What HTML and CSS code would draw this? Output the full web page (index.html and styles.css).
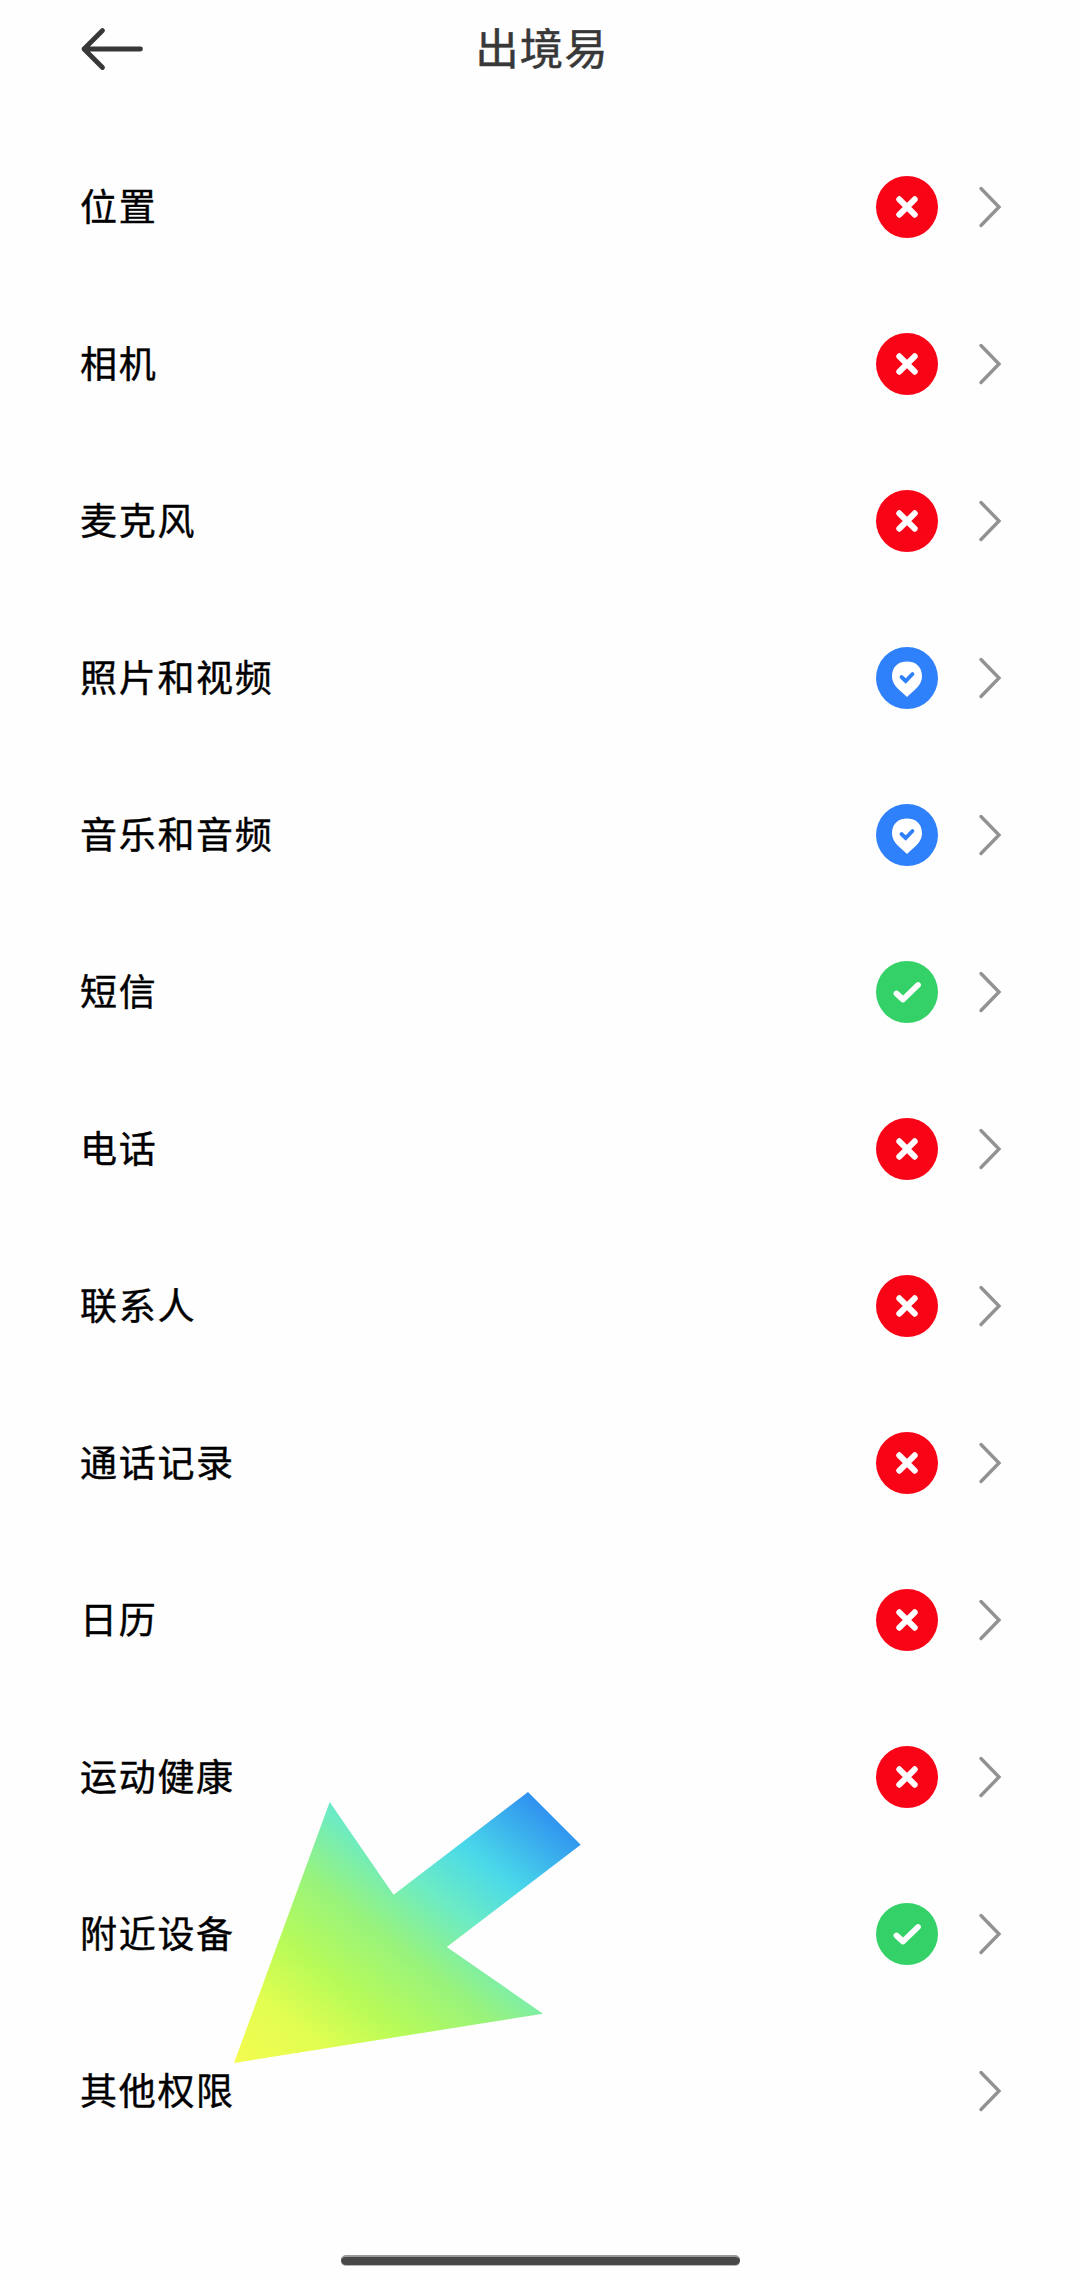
FILE: index.html
```html
<!DOCTYPE html>
<html lang="zh-CN">
<head>
<meta charset="utf-8">
<title>出境易</title>
<link rel="stylesheet" href="styles.css">
</head>
<body>
<svg class="defs" width="0" height="0" aria-hidden="true">
  <symbol id="denied" viewBox="0 0 62 62"><circle cx="31" cy="31" r="31" fill="#f90417"/><path d="M23.3 23.3 38.7 38.7M38.7 23.3 23.3 38.7" fill="none" stroke="#fff" stroke-width="6" stroke-linecap="round"/></symbol>
  <symbol id="partial" viewBox="0 0 62 62"><circle cx="31" cy="31" r="31" fill="#2f80fb"/><path d="M31 14.5C38.5 14.5 46 18.500 46 29.500C46 39 37 43.500 31 50C25 43.500 16 39 16 29.500C16 18.500 23.500 14.500 31 14.500Z" fill="#fff"/><path d="M25.500 30 29.700 34 36.500 27" fill="none" stroke="#2f80fb" stroke-width="3.800" stroke-linecap="round"/></symbol>
  <symbol id="allowed" viewBox="0 0 62 62"><circle cx="31" cy="31" r="31" fill="#33d168"/><path d="M20.500 32.500 27 38.500 42 24" fill="none" stroke="#fff" stroke-width="5.800" stroke-linecap="round" stroke-linejoin="round"/></symbol>
  <symbol id="chevron" viewBox="0 0 24 42"><path d="M3 2.500 21 21 3 39.500" fill="none" stroke="#929292" stroke-width="3.400" stroke-linecap="round"/></symbol>
</svg>
<div class="screen">
  <header class="header">
    <svg class="back" viewBox="0 0 64 44"><path d="M4 22H60.500M22.500 3.500 4 22 22.500 40.500" fill="none" stroke="#383838" stroke-width="4.800" stroke-linecap="round" stroke-linejoin="round"/></svg>
    <h1 class="title">出境易</h1>
  </header>
  <ul class="list">
    <li class="row"><span class="label">位置</span><svg class="status"><use href="#denied"/></svg><svg class="chevron"><use href="#chevron"/></svg></li>
    <li class="row"><span class="label">相机</span><svg class="status"><use href="#denied"/></svg><svg class="chevron"><use href="#chevron"/></svg></li>
    <li class="row"><span class="label">麦克风</span><svg class="status"><use href="#denied"/></svg><svg class="chevron"><use href="#chevron"/></svg></li>
    <li class="row"><span class="label">照片和视频</span><svg class="status"><use href="#partial"/></svg><svg class="chevron"><use href="#chevron"/></svg></li>
    <li class="row"><span class="label">音乐和音频</span><svg class="status"><use href="#partial"/></svg><svg class="chevron"><use href="#chevron"/></svg></li>
    <li class="row"><span class="label">短信</span><svg class="status"><use href="#allowed"/></svg><svg class="chevron"><use href="#chevron"/></svg></li>
    <li class="row"><span class="label">电话</span><svg class="status"><use href="#denied"/></svg><svg class="chevron"><use href="#chevron"/></svg></li>
    <li class="row"><span class="label">联系人</span><svg class="status"><use href="#denied"/></svg><svg class="chevron"><use href="#chevron"/></svg></li>
    <li class="row"><span class="label">通话记录</span><svg class="status"><use href="#denied"/></svg><svg class="chevron"><use href="#chevron"/></svg></li>
    <li class="row"><span class="label">日历</span><svg class="status"><use href="#denied"/></svg><svg class="chevron"><use href="#chevron"/></svg></li>
    <li class="row"><span class="label">运动健康</span><svg class="status"><use href="#denied"/></svg><svg class="chevron"><use href="#chevron"/></svg></li>
    <li class="row"><span class="label">附近设备</span><svg class="status"><use href="#allowed"/></svg><svg class="chevron"><use href="#chevron"/></svg></li>
    <li class="row"><span class="label">其他权限</span><svg class="chevron"><use href="#chevron"/></svg></li>
  </ul>
  <div class="home-bar"></div>
  <svg class="pointer" viewBox="234 1791 348 274">
    <defs>
      <linearGradient id="rainbow" gradientUnits="userSpaceOnUse" x1="554" y1="1812" x2="308" y2="2123">
        <stop offset="0" stop-color="#2f90f0"/>
        <stop offset=".21" stop-color="#4ad9e9"/>
        <stop offset=".35" stop-color="#6cebc4"/>
        <stop offset=".51" stop-color="#98f37c"/>
        <stop offset=".68" stop-color="#b8fb58"/>
        <stop offset=".83" stop-color="#e2fe50"/>
        <stop offset="1" stop-color="#f4fb50"/>
      </linearGradient>
    </defs>
    <path d="M234 2063 329.700 1802 393.600 1894.700 528 1792 580.700 1844.700 446.800 1947 543 2013.700Z" fill="url(#rainbow)"/>
  </svg>
</div>
</body>
</html>
```
FILE: styles.css
```css
* { box-sizing: border-box; }

body {
  margin: 0;
  background: #fefefe;
  font-family: "Noto Sans CJK SC", sans-serif;
}

.defs { position: absolute; }

.screen {
  position: relative;
  display: flex;
  flex-direction: column;
  width: 1080px;
  height: 2280px;
  overflow: hidden;
}

.header {
  display: grid;
  grid-template-columns: 64px 1fr 64px;
  align-items: center;
  height: 98px;
  padding: 0 80px;
}

.back { width: 64px; height: 44px; }

.title {
  margin: 0;
  padding: 0 0 5px 4px;
  color: #383838;
  font-size: 43.5px;
  font-weight: 400;
  letter-spacing: 1px;
  line-height: 64px;
  text-align: center;
  -webkit-text-stroke: 0.5px #383838;
}

.list {
  margin: 30px 0 0;
  padding: 0;
  list-style: none;
}

.row {
  display: flex;
  align-items: center;
  height: 157px;
  padding: 0 78px 0 80px;
}

.label {
  flex: 1;
  padding-bottom: 4px;
  color: #000;
  font-size: 37px;
  letter-spacing: 1.7px;
  line-height: 56px;
  -webkit-text-stroke: 0.4px #000;
}

.status { width: 62px; height: 62px; }

.chevron {
  width: 24px;
  height: 42px;
  margin-left: 40px;
}

.home-bar {
  width: 399px;
  height: 11px;
  margin: auto auto 14px 341px;
  border-top: 2px solid #9a9a9a;
  border-bottom: 1px solid #b8b8b8;
  border-radius: 5px;
  background: #484848;
}

/* Callout arrow laid over the last rows */
.pointer {
  position: absolute;
  left: 234px;
  top: 1791px;
  width: 348px;
  height: 274px;
}
```
